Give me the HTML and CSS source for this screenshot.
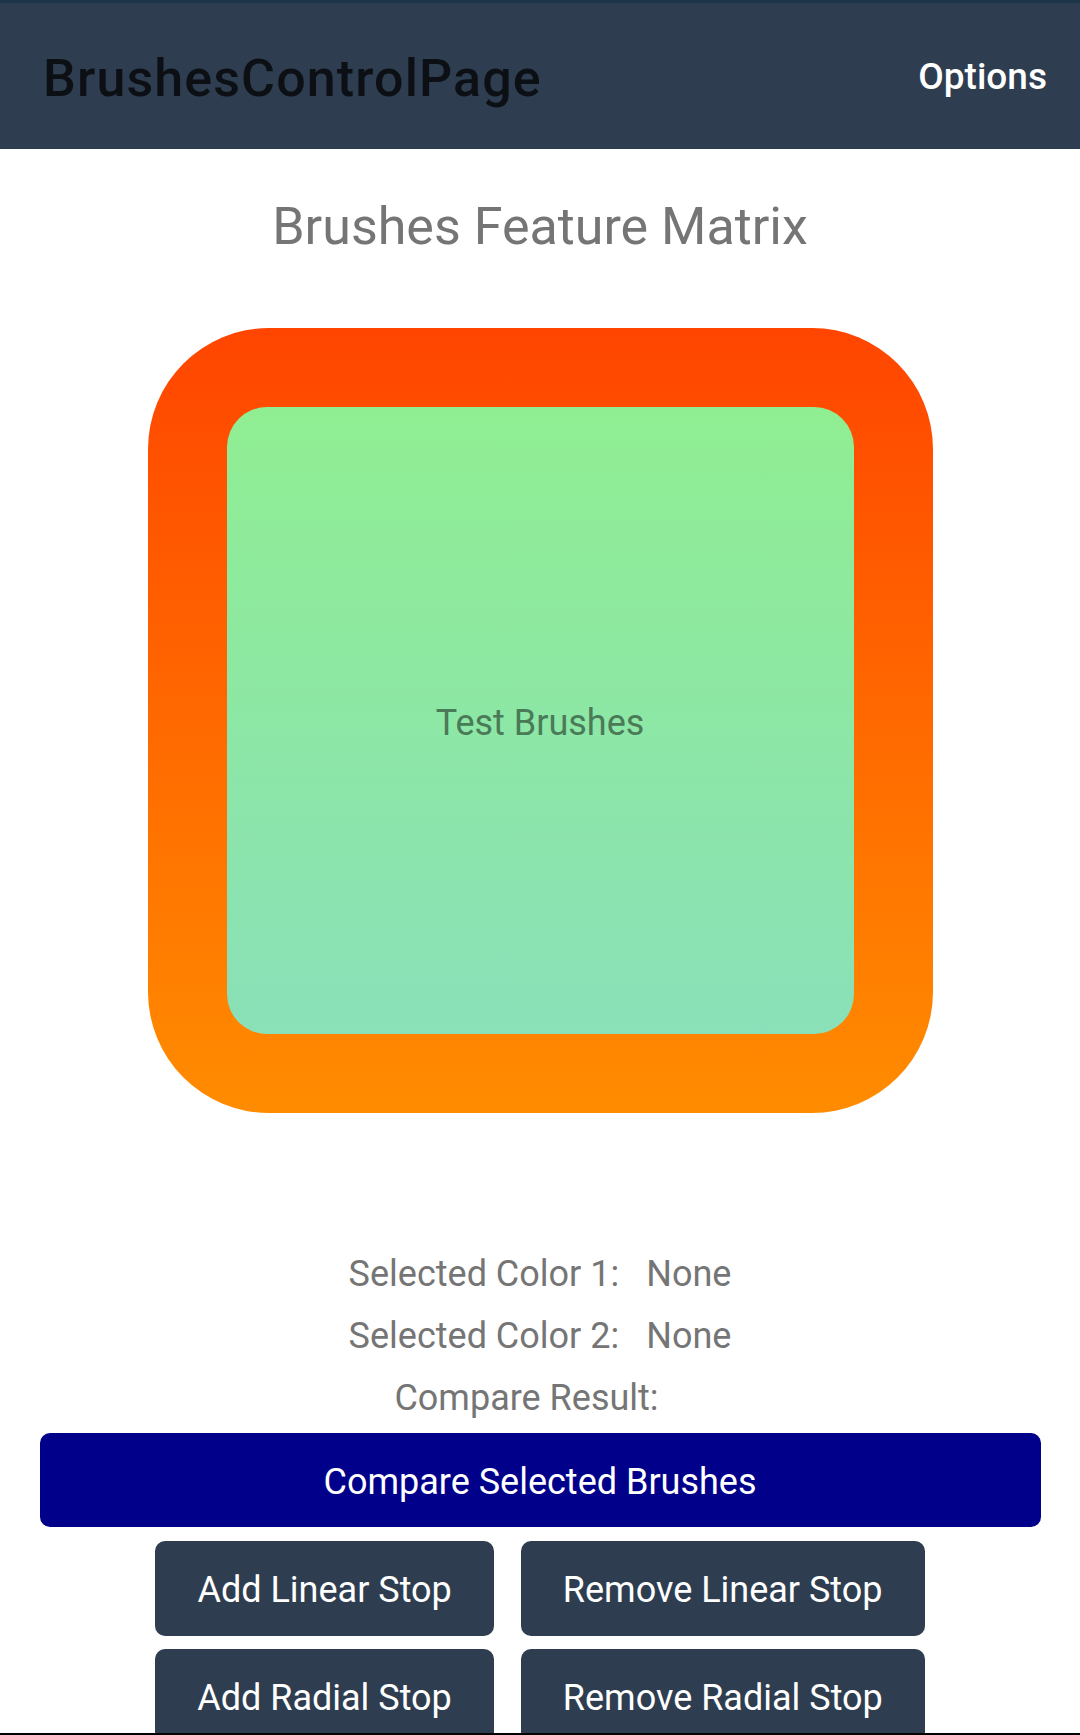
FILE: index.html
```html
<!DOCTYPE html>
<html>
<head>
<meta charset="utf-8">
<link rel="stylesheet" href="styles.css">
</head>
<body>
<header class="appbar">
  <div class="appbar-title">BrushesControlPage</div>
  <div class="appbar-action">Options</div>
</header>
<main class="content">
  <h1 class="page-heading">Brushes Feature Matrix</h1>
  <div class="brush-outer">
    <div class="brush-inner">Test Brushes</div>
  </div>
  <div class="info">
    <div class="info-row"><span>Selected Color 1:</span><span>None</span></div>
    <div class="info-row"><span>Selected Color 2:</span><span>None</span></div>
    <div class="info-row"><span>Compare Result:</span><span></span></div>
  </div>
  <button class="btn btn-primary">Compare Selected Brushes</button>
  <div class="btn-row">
    <button class="btn btn-dark">Add Linear Stop</button>
    <button class="btn btn-dark">Remove Linear Stop</button>
  </div>
  <div class="btn-row">
    <button class="btn btn-dark">Add Radial Stop</button>
    <button class="btn btn-dark">Remove Radial Stop</button>
  </div>
</main>
<div class="bottom-edge"></div>
</body>
</html>
```

FILE: styles.css
```css
html, body {
  margin: 0;
  padding: 0;
  background: #ffffff;
  font-family: Roboto, "Liberation Sans", sans-serif;
  overflow: hidden;
  height: 1735px;
}

.appbar {
  box-sizing: border-box;
  height: 149px;
  border-top: 3px solid #1d3449;
  background: #2e3e50;
  display: flex;
  align-items: center;
  justify-content: space-between;
  padding: 0 33px 0 43px;
}

.appbar-title {
  font-size: 52px;
  font-weight: 500;
  letter-spacing: 1.1px;
  color: #0c1014;
  line-height: 1;
  padding-top: 6px;
}

.appbar-action {
  font-size: 37px;
  font-weight: 500;
  color: #ffffff;
  line-height: 1;
}

.content {
  display: flex;
  flex-direction: column;
  align-items: center;
}

.page-heading {
  margin: 50px 0 0 0;
  font-size: 52px;
  font-weight: 400;
  line-height: 56px;
  color: #757575;
}

.brush-outer {
  box-sizing: border-box;
  margin-top: 73px;
  width: 785px;
  height: 785px;
  padding: 79px;
  border-radius: 121px;
  background: linear-gradient(to bottom, #ff4500, #ff8c00);
}

.brush-inner {
  width: 100%;
  height: 100%;
  border-radius: 40px;
  background: linear-gradient(to bottom, #90ee92, #8ae0b8);
  display: flex;
  align-items: center;
  justify-content: center;
  font-size: 36px;
  color: #4a7a58;
  padding-top: 5px;
  box-sizing: border-box;
}

.info {
  margin-top: 130px;
  display: flex;
  flex-direction: column;
  align-items: center;
}

.info-row {
  display: flex;
  gap: 27px;
  font-size: 36px;
  line-height: 62px;
  color: #757575;
}

.btn {
  box-sizing: border-box;
  border: none;
  font-family: Roboto, "Liberation Sans", sans-serif;
  font-size: 36px;
  color: #ffffff;
  border-radius: 10px;
  cursor: pointer;
  padding-top: 4px;
}

.btn-primary {
  margin-top: 4px;
  width: 1001px;
  height: 94px;
  background: #00008b;
}

.btn-row {
  display: flex;
  gap: 27px;
  margin-top: 14px;
}

.btn-row + .btn-row {
  margin-top: 13px;
}

.btn-dark {
  height: 95px;
  padding-left: 42px;
  padding-right: 42px;
  background: #2e3e50;
}

.bottom-edge {
  position: fixed;
  left: 0;
  right: 0;
  bottom: 0;
  height: 2px;
  background: #000000;
}
```
